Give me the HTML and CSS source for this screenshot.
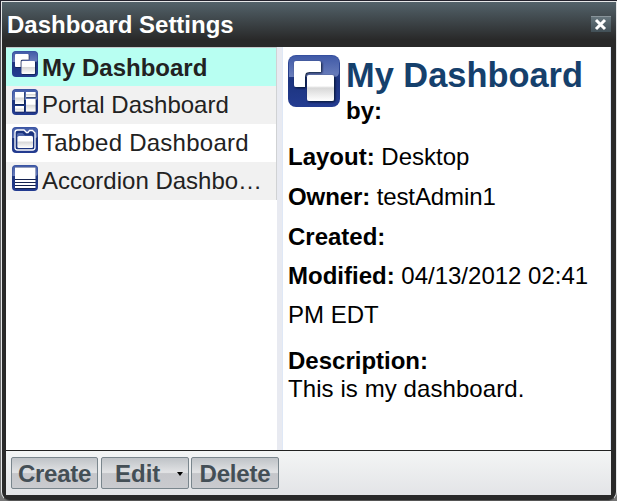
FILE: index.html
```
<!DOCTYPE html>
<html lang="en">
<head>
<meta charset="utf-8">
<title>Dashboard Settings</title>
<link rel="stylesheet" href="styles.css">
</head>
<body>
<svg class="defs" width="0" height="0" aria-hidden="true">
  <defs>
    <linearGradient id="blue" x2="0" y2="1"><stop offset="0" stop-color="#3650a0"/><stop offset=".5" stop-color="#1c347f"/><stop offset="1" stop-color="#243c91"/></linearGradient>
    <linearGradient id="gloss" x2="0" y2="1"><stop offset="0" stop-color="#405aa7"/><stop offset="1" stop-color="#6b7fbc"/></linearGradient>
    <linearGradient id="paper" x2="0" y2="1"><stop offset="0" stop-color="#fff"/><stop offset=".42" stop-color="#fff"/><stop offset=".5" stop-color="#d8d8d8"/><stop offset="1" stop-color="#fff"/></linearGradient>
    <filter id="shade" x="-20%" y="-20%" width="150%" height="150%"><feDropShadow dx="1" dy="1" stdDeviation="1" flood-color="#000820" flood-opacity=".9"/></filter>
    <symbol id="tile" viewBox="0 0 52 52">
      <rect width="52" height="52" rx="8" fill="url(#blue)"/>
      <path d="M1 22V8Q1 1 8 1H44Q51 1 51 8V17Q51 22 46 22Z" fill="url(#gloss)"/>
    </symbol>
    <symbol id="desktop" viewBox="0 0 52 52">
      <use href="#tile"/>
      <g filter="url(#shade)"><path d="M8 6H31Q33 6 33 8V17H21Q17 17 17 21V32H8Q6 32 6 30V8Q6 6 8 6Z" fill="#fff"/></g>
      <g filter="url(#shade)"><rect x="19" y="20" width="27" height="26" rx="2" fill="url(#paper)"/></g>
    </symbol>
    <symbol id="portal" viewBox="0 0 52 52">
      <use href="#tile"/>
      <g filter="url(#shade)" fill="url(#paper)"><rect x="6" y="6" width="18" height="24"/><rect x="6" y="34" width="18" height="11"/><rect x="28" y="6" width="19" height="10"/><rect x="28" y="20" width="19" height="25"/></g>
    </symbol>
    <symbol id="tabbed" viewBox="0 0 52 52">
      <use href="#tile"/>
      <path d="M11 6H24L29 11H32L35 7H41L46 12V41Q46 46 41 46H11Q6 46 6 41V11Q6 6 11 6Z" fill="#1c347f" stroke="#fff" stroke-width="2.6"/>
      <path d="M13 12H21L26 17H39Q42 17 42 20V39Q42 42 39 42H13Q10 42 10 39V15Q10 12 13 12Z" fill="#5269ac"/>
      <rect x="11" y="18" width="31" height="24" rx="3" fill="url(#paper)"/>
    </symbol>
    <symbol id="accordion" viewBox="0 0 52 52">
      <use href="#tile"/>
      <path d="M6 5H47V48H6Z" fill="#14224f"/>
      <path d="M6 5H47V28H6ZM6 30H47V34H6ZM6 36H47V40H6ZM6 42H47V46H6Z" fill="#fff"/>
    </symbol>
  </defs>
</svg>
<div class="window">
  <header class="titlebar">
    <h1>Dashboard Settings</h1>
    <button class="close" aria-label="Close"><svg width="20" height="16" viewBox="0 0 20 16"><path d="M5 3L14 12M14 3L5 12" stroke="#fff" stroke-width="3"/></svg></button>
  </header>
  <main class="content">
    <ul class="list">
      <li class="selected"><svg><use href="#desktop"/></svg><span>My Dashboard</span></li>
      <li class="alt"><svg><use href="#portal"/></svg><span>Portal Dashboard</span></li>
      <li class="wide"><svg><use href="#tabbed"/></svg><span>Tabbed Dashboard</span></li>
      <li class="alt"><svg><use href="#accordion"/></svg><span>Accordion Dashbo…</span></li>
    </ul>
    <div class="splitter"></div>
    <section class="detail">
      <div class="heading">
        <svg><use href="#desktop"/></svg>
        <div><h2>My Dashboard</h2><b class="by">by:</b></div>
      </div>
      <p class="field"><b>Layout:</b> Desktop</p>
      <p class="field owner"><b>Owner:</b> testAdmin1</p>
      <p class="field"><b>Created:</b></p>
      <p class="field modified"><b>Modified:</b> 04/13/2012 02:41<br>PM EDT</p>
      <p class="description"><b>Description:</b><br><span>This is my dashboard.</span></p>
    </section>
  </main>
  <footer class="toolbar">
    <button class="create">Create</button>
    <button class="edit">Edit<i class="arrow"></i></button>
    <button class="delete">Delete</button>
  </footer>
</div>
</body>
</html>
```
FILE: styles.css
```
* { box-sizing: border-box; }
body {
  margin: 0;
  height: 501px;
  padding: 1px 0 0 1px;
  overflow: hidden;
  background: linear-gradient(#23222d 0, #23222d 18px, #55555a 40px, #777 100%);
  font: 24px/28px "Liberation Sans", Arial, sans-serif;
  color: #000;
}
.defs { position: absolute; }
.window {
  width: 616px;
  height: 500px;
  display: flex;
  flex-direction: column;
  padding: 0 5px 4px 4px;
  border: 1px solid #e5e7e8;
  border-bottom-color: #555;
  border-radius: 0 0 9px 9px;
  background: #292929;
}
.titlebar {
  height: 45px;
  flex: none;
  display: flex;
  align-items: center;
  justify-content: space-between;
  margin: 0 -5px 0 -4px;
  padding: 0 5px;
  background: linear-gradient(#53626a, #292929 84%);
}
h1 { margin: 0; font-size: 24px; line-height: 28px; color: #fff; }
button { margin: 0; padding: 0; border: 0; font: inherit; }
.close {
  width: 20px;
  height: 16px;
  margin-top: -2px;
  border-top: 1px solid #89949a;
  background: linear-gradient(#66757c, #425057);
}
.close svg { display: block; }
.content { height: 403px; flex: none; display: flex; background: #fff; }
.list { width: 271px; flex: none; margin: 0; padding: 0; list-style: none; border-top: 1px solid #c5c9cb; }
.list li {
  height: 38px;
  display: flex;
  padding: 3px 0 0 6px;
  border-right: 1px solid #d0d2d4;
  color: #222;
  line-height: 32px;
  white-space: nowrap;
}
.list svg { width: 26px; height: 26px; flex: none; margin-right: 4px; }
.list .alt { background: #f1f1f1; }
.list .selected { background: #b8fff2; font-weight: bold; line-height: 34px; }
.list .wide { letter-spacing: .25px; }
.splitter { width: 6px; flex: none; background: #e8eaf1; border-right: 1px solid #dfe8f6; }
.detail { flex: 1; padding: 8px 0 0 5px; border-right: 1px solid #dfe8f6; white-space: nowrap; }
.heading { height: 82px; display: flex; }
.heading svg { width: 52px; height: 52px; flex: none; margin-right: 6px; }
h2 { margin: 0; color: #15406c; font-size: 34.4px; line-height: 40px; }
.by { display: block; margin-top: 2px; }
p { margin: 0; }
.field { line-height: 40px; }
.owner { letter-spacing: -.1px; }
.modified { margin-top: -1px; line-height: 39px; }
.description { margin-top: 13px; }
.description span { letter-spacing: .08px; }
.toolbar {
  height: 45px;
  flex: none;
  display: flex;
  gap: 3px;
  padding: 6px 5px;
  border-top: 1px solid #222;
  background: linear-gradient(#f3f5f5, #e3e4e7);
}
.toolbar button {
  width: 88px;
  height: 32px;
  border: 1px solid #7a868d;
  border-radius: 2px;
  background: linear-gradient(#bfc3c7, #e2e3e5 48%, #c5c6ca 52%, #cacbcf);
  color: #444f56;
  font-weight: bold;
  line-height: 32px;
  white-space: nowrap;
}
.toolbar .create { width: 87px; letter-spacing: -.3px; }
.toolbar .edit { display: flex; align-items: center; padding: 1px 0 0 13px; }
.toolbar .delete { margin-left: -1px; letter-spacing: -.2px; }
.arrow { margin-left: 17px; border: 3px solid transparent; border-top: 4px solid #000; border-bottom: 0; }
```
